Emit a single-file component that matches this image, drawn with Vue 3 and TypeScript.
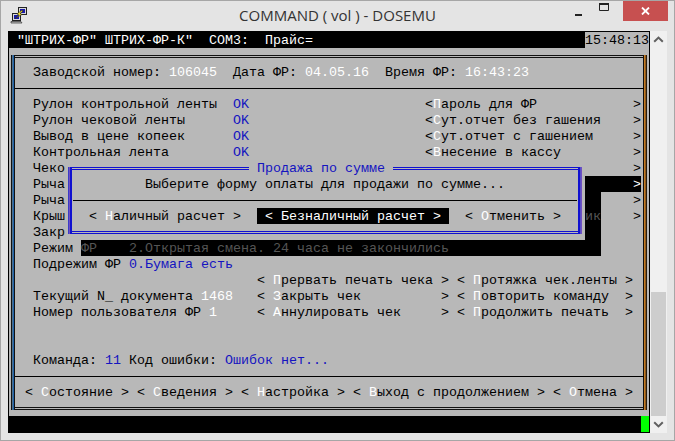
<script setup lang="ts">
type Kind = 'n' | 'w' | 'b' | 'h' | 'd' | 's' | 'k' | 't' | 'g';
type Seg = [number, string, Kind?];
interface Cell { text: string; kind: Kind }

// Lays segments out on the 8px character grid; "~" marks the following letter as the hot key.
function build(segs: Seg[], start: number): Cell[] {
  const out: Cell[] = [];
  let col = start;
  for (const [at, raw, kind = 'n'] of segs) {
    if (at > col) out.push({ text: ' '.repeat(at - col), kind: 'n' });
    const parts = raw.split('~');
    parts.forEach((part, i) => {
      if (i === 0) {
        if (part) out.push({ text: part, kind });
      } else {
        out.push({ text: part[0], kind: kind === 's' ? 's' : 'h' });
        if (part.length > 1) out.push({ text: part.slice(1), kind });
      }
    });
    col = at + raw.replace('~', '').length;
  }
  return out;
}

const header = build([
  [1, '"ШТРИХ-ФР" ШТРИХ-ФР-К"', 'w'],
  [25, 'COM3:', 'w'],
  [32, 'Прайс=', 'w'],
  [72, '15:48:13', 't'],
], 0);

const top = build([
  [3, 'Заводской номер: '],
  [20, '106045', 'w'],
  [28, 'Дата ФР: '],
  [37, '04.05.16', 'w'],
  [47, 'Время ФР: '],
  [57, '16:43:23', 'w'],
], 2);

const middle = ([
  [[3, 'Рулон контрольной ленты'], [28, 'OK', 'b'], [52, '<~Пароль для ФР'], [78, '>']],
  [[3, 'Рулон чековой ленты'], [28, 'OK', 'b'], [52, '<~Сут.отчет без гашения'], [78, '>']],
  [[3, 'Вывод в цене копеек'], [28, 'OK', 'b'], [52, '<~Сут.отчет с гашением'], [78, '>']],
  [[3, 'Контрольная лента'], [28, 'OK', 'b'], [52, '<~Внесение в кассу'], [78, '>']],
  [[3, 'Чеко'], [78, '>']],
  [[3, 'Рыча'], [72, '      ', 'k'], [78, '>', 's']],
  [[3, 'Рыча'], [72, '  ', 'k'], [78, '>']],
  [[3, 'Крыш'], [72, 'ик', 'd'], [78, '>']],
  [[3, 'Закр'], [72, '  ', 'k']],
  [[3, 'Режим'], [9, 'ФР    2.Открытая смена. 24 часа не закончились', 'd'], [55, '                   ', 'k']],
  [[3, 'Подрежим ФР'], [15, '0.Бумага есть', 'b']],
  [[31, '< ~Прервать печать чека'], [54, '>'], [56, '< ~Протяжка чек.ленты'], [77, '>']],
  [[3, 'Текущий N_ документа'], [24, '1468', 'w'], [31, '< ~Закрыть чек'], [54, '>'], [56, '< ~Повторить команду'], [77, '>']],
  [[3, 'Номер пользователя ФР'], [25, '1', 'w'], [31, '< ~Аннулировать чек'], [54, '>'], [56, '< ~Продолжить печать'], [77, '>']],
  [],
  [],
  [[3, 'Команда: '], [12, '11', 'b'], [14, ' Код ошибки: '], [27, 'Ошибок нет...', 'b']],
] as Seg[][]).map((row) => build(row, 2));

const bottom = build([
  [2, '< ~Состояние >'],
  [16, '< ~Сведения >'],
  [29, '< ~Настройка >'],
  [43, '< ~Выход с продолжением >'],
  [68, '< ~Отмена >'],
], 2);

const status = build([[79, ' ', 'g']], 0);

const message = build([[17, 'Выберите форму оплаты для продажи по сумме...']], 8);
const buttons = build([
  [10, '< ~Наличный расчет >'],
  [31, ' < ~Безналичный расчет > ', 's'],
  [57, '< ~Отменить >'],
], 8);
</script>

<template>
  <div class="window">
    <header class="titlebar">
      <svg class="app-icon" width="18" height="18" viewBox="0 0 18 18" aria-hidden="true">
        <rect x="8.5" y="1.5" width="8" height="7" fill="#d8d8d8" stroke="#222" />
        <rect x="10" y="3" width="5" height="4" fill="#1818a8" />
        <rect x="2.5" y="7.5" width="8" height="7" fill="#d8d8d8" stroke="#222" />
        <rect x="4" y="9" width="5" height="4" fill="#1818a8" />
        <path d="M1 15.5h10l1 1.5H1z" fill="#bdbdbd" stroke="#333" stroke-width=".7" />
        <path d="M12 4 7 8l2 1-4 3.5 7-4-2-1 3-2.5z" fill="#f6e22a" stroke="#222" stroke-width=".6" />
      </svg>
      <div class="title">COMMAND ( vol ) - DOSEMU</div>
      <div class="controls">
        <div class="ctl">
          <svg width="7" height="2" viewBox="0 0 7 2" class="min" aria-hidden="true"><rect width="7" height="2" fill="#222" /></svg>
        </div>
        <div class="ctl">
          <svg width="10" height="8" viewBox="0 0 10 8" class="max" aria-hidden="true"><path d="M.5 1.5h9v6h-9z" fill="none" stroke="#222" /><rect width="10" height="2" fill="#222" /></svg>
        </div>
        <div class="ctl close">
          <svg width="9" height="8" viewBox="0 0 9 8" aria-hidden="true"><path d="M1 .5 8 7.5M8 .5 1 7.5" stroke="#fff" stroke-width="1.8" /></svg>
        </div>
      </div>
    </header>

    <main class="client">
      <section class="terminal">
        <div class="line head">
          <span v-for="(c, i) in header" :key="i" :class="c.kind">{{ c.text }}</span>
        </div>

        <div class="panel">
          <div class="frame">
            <div class="line row">
              <span v-for="(c, i) in top" :key="i" :class="c.kind">{{ c.text }}</span>
            </div>
            <div class="rule"></div>
            <div v-for="(row, r) in middle" :key="r" class="line row">
              <span v-for="(c, i) in row" :key="i" :class="c.kind">{{ c.text }}</span>
            </div>
            <div class="rule"></div>
            <div class="line row">
              <span v-for="(c, i) in bottom" :key="i" :class="c.kind">{{ c.text }}</span>
            </div>
          </div>
        </div>

        <div class="line foot">
          <span v-for="(c, i) in status" :key="i" :class="c.kind">{{ c.text }}</span>
        </div>

        <div class="dialog">
          <div class="dlg-frame">
            <div class="dlg-title">&nbsp;Продажа по сумме&nbsp;</div>
            <div class="line">
              <span v-for="(c, i) in message" :key="i" :class="c.kind">{{ c.text }}</span>
            </div>
            <div class="rule"></div>
            <div class="line">
              <span v-for="(c, i) in buttons" :key="i" :class="c.kind">{{ c.text }}</span>
            </div>
          </div>
        </div>
      </section>

      <aside class="scrollbar">
        <div class="sb-btn">
          <svg width="11" height="7" viewBox="0 0 11 7" aria-hidden="true"><path d="M1.2 5.8 5.5 1.6 9.8 5.8" fill="none" stroke="#606060" stroke-width="2" /></svg>
        </div>
        <div class="sb-track"><div class="sb-thumb"></div></div>
        <div class="sb-btn">
          <svg width="11" height="7" viewBox="0 0 11 7" aria-hidden="true"><path d="M1.2 1.2 5.5 5.4 9.8 1.2" fill="none" stroke="#606060" stroke-width="2" /></svg>
        </div>
      </aside>
    </main>
  </div>
</template>

<style scoped>
.window {
  width: 675px;
  height: 441px;
  box-sizing: border-box;
  background: #e4e4e4;
  border: 1px solid #a6a6a6;
  display: flex;
  flex-direction: column;
  overflow: hidden;
}
.titlebar {
  height: 30px;
  flex: none;
  display: grid;
  grid-template-columns: 1fr auto 1fr;
  align-items: start;
}
.app-icon {
  margin: 5px 0 0 9px;
}
.title {
  font-family: "Open Sans", sans-serif;
  font-size: 15px;
  line-height: 20px;
  margin-top: 4px;
  color: #333;
  white-space: nowrap;
}
.controls {
  justify-self: end;
  display: flex;
  margin-right: 6px;
}
.ctl {
  width: 26px;
  height: 20px;
  display: flex;
  align-items: center;
  justify-content: center;
}
.min {
  margin-top: 8px;
}
.max {
  margin-top: -8px;
}
.close {
  width: 45px;
  margin-left: 6px;
  background: #c75050;
}
.client {
  flex: none;
  display: flex;
  margin-left: 7px;
  width: 660px;
}
.terminal {
  position: relative;
  width: 640px;
  flex: none;
  background: #000;
  border: 1px solid #000;
  font-family: "Liberation Mono", monospace;
  font-size: 13.333px;
  color: #000;
}
.line {
  height: 16px;
  line-height: 18px;
  white-space: pre;
}
.line span {
  display: inline-block;
  height: 16px;
  vertical-align: top;
}
.head,
.foot {
  background: #000;
}
.panel {
  background: #b8b8b8;
  padding: 7px 2px 6px;
}
.frame {
  padding: 9px 0 10px;
  box-shadow:
    inset 1px 0 0 #111,
    inset 2px 0 0 #4c6f8c,
    inset 3px 0 0 #1f62a8,
    inset 4px 0 0 #111,
    inset -1px 0 0 #2a1a08,
    inset -2px 0 0 #8c5a1e,
    inset -3px 0 0 #c47a22,
    inset -4px 0 0 #111,
    inset 0 1px 0 #111,
    inset 0 2px 0 #b8b8b8,
    inset 0 3px 0 #111,
    inset 0 -1px 0 #111,
    inset 0 -2px 0 #b8b8b8,
    inset 0 -3px 0 #111;
}
.row {
  padding-left: 14px;
}
.rule {
  height: 16px;
  margin: 0 3px 0 4px;
  background: linear-gradient(#000, #000) 0 8px / 100% 1px no-repeat;
}
.n { color: #000; }
.w { color: #fff; }
.b { color: #1414c0; }
.h { color: #fff; }
.d { color: #555; background: #000; }
.k { background: #000; }
.s { color: #fff; background: #000; }
.t { color: #000; background: #b8b8b8; }
.g { background: #00ff00; }

.dialog {
  position: absolute;
  left: 56px;
  top: 128px;
  width: 520px;
  height: 80px;
  box-sizing: border-box;
  padding: 7px 3px 6px;
  background: #b8b8b8;
}
.dlg-frame {
  position: relative;
  height: 67px;
  box-sizing: border-box;
  padding: 9px 5px 0;
  box-shadow:
    inset 1px 0 0 #3a3ac8,
    inset 2px 0 0 #7050c0,
    inset 3px 0 0 #1010d0,
    inset 4px 0 0 #1010d0,
    inset -1px 0 0 #7050c0,
    inset -2px 0 0 #5a50c8,
    inset -3px 0 0 #1010d0,
    inset -4px 0 0 #1010d0,
    inset 0 1px 0 #1010d0,
    inset 0 2px 0 #b8b8b8,
    inset 0 3px 0 #1010d0,
    inset 0 -1px 0 #1010d0,
    inset 0 -2px 0 #b8b8b8,
    inset 0 -3px 0 #1010d0;
}
.dlg-frame .rule {
  margin: 0;
}
.dlg-title {
  position: absolute;
  left: 181px;
  top: -7px;
  height: 16px;
  line-height: 18px;
  background: #b8b8b8;
  color: #1414c0;
  white-space: pre;
}
.scrollbar {
  width: 17px;
  flex: none;
  display: flex;
  flex-direction: column;
  background: #f0f0f0;
}
.sb-btn {
  height: 17px;
  flex: none;
  display: flex;
  align-items: center;
  justify-content: center;
}
.sb-track {
  flex: 1;
  display: flex;
  flex-direction: column;
  justify-content: flex-end;
}
.sb-thumb {
  height: 124px;
  margin: 0 1px;
  background: #cdcdcd;
}
</style>

<style>
html,
body {
  margin: 0;
  overflow: hidden;
  background: #e4e4e4;
}
</style>
